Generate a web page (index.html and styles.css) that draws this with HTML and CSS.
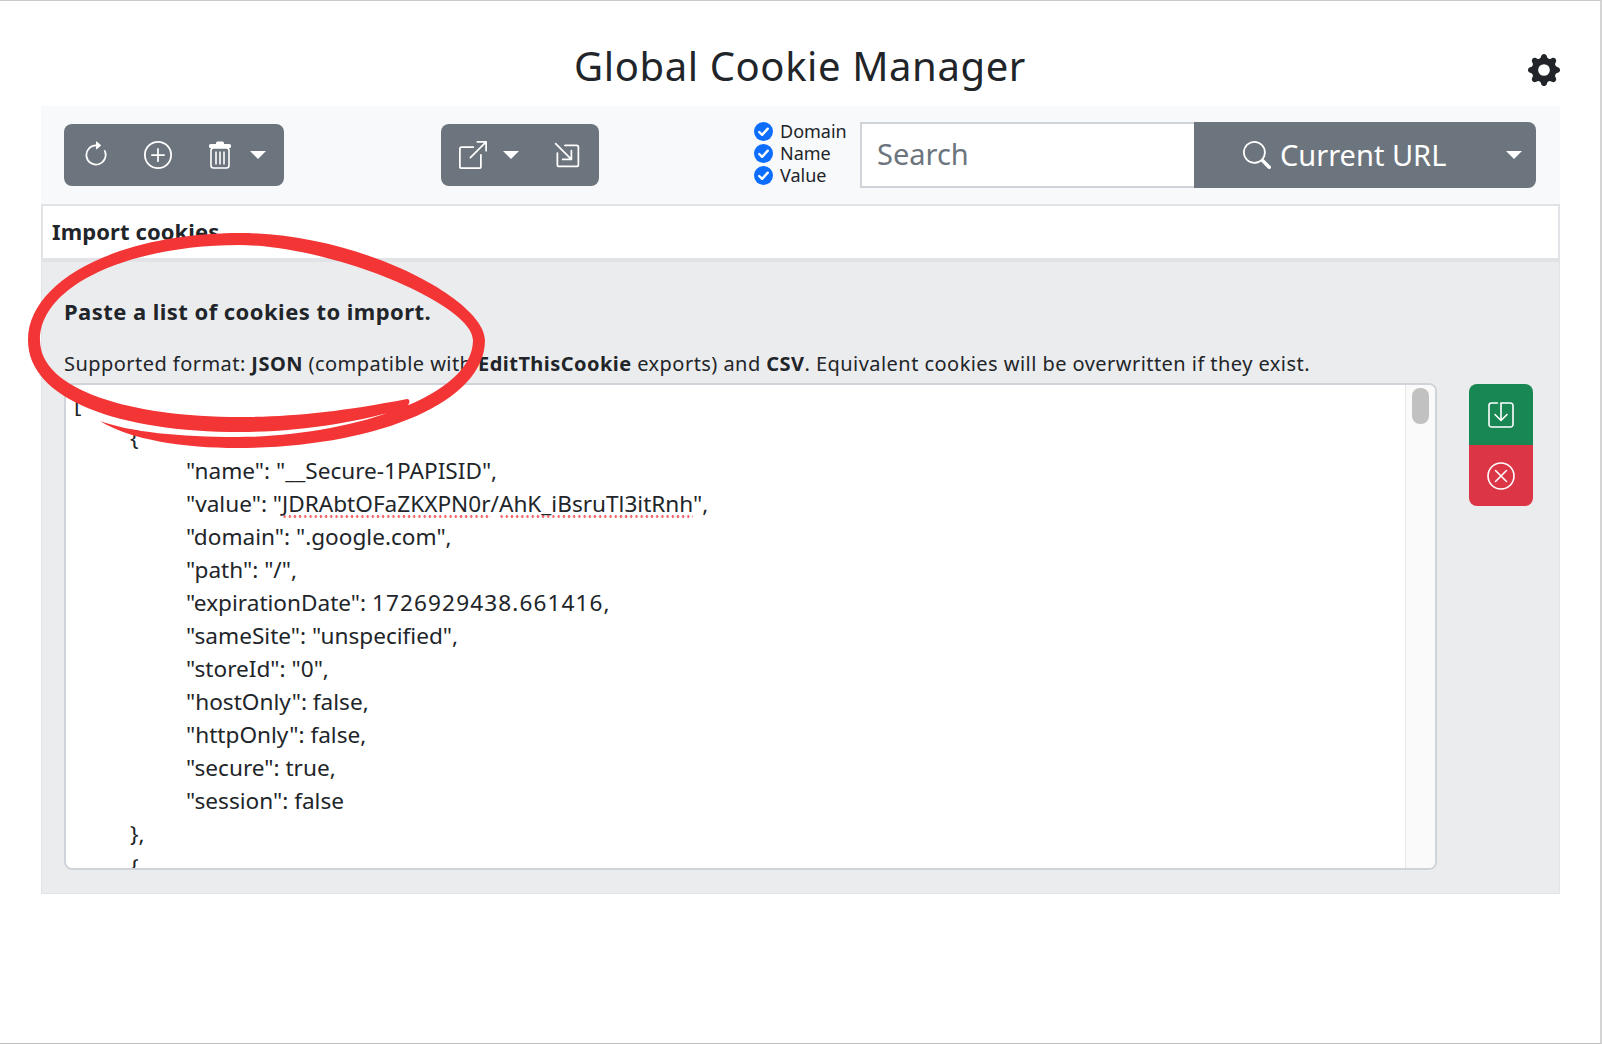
FILE: index.html
```html
<!DOCTYPE html>
<html lang="en">
<head>
<meta charset="utf-8">
<title>Global Cookie Manager</title>
<link rel="stylesheet" href="styles.css">
</head>
<body>
<div class="frame">
  <header class="top">
    <h1 class="title">Global Cookie Manager</h1>
    <svg class="gear" viewBox="0 0 16 16"><path d="M9.405 1.05c-.413-1.4-2.397-1.4-2.81 0l-.1.34a1.464 1.464 0 0 1-2.105.872l-.31-.17c-1.283-.698-2.686.705-1.987 1.987l.169.311c.446.82.023 1.841-.872 2.105l-.34.1c-1.4.413-1.4 2.397 0 2.81l.34.1a1.464 1.464 0 0 1 .872 2.105l-.17.31c-.698 1.283.705 2.686 1.987 1.987l.311-.169a1.464 1.464 0 0 1 2.105.872l.1.34c.413 1.4 2.397 1.4 2.81 0l.1-.34a1.464 1.464 0 0 1 2.105-.872l.31.17c1.283.698 2.686-.705 1.987-1.987l-.169-.311a1.464 1.464 0 0 1 .872-2.105l.34-.1c1.4-.413 1.4-2.397 0-2.81l-.34-.1a1.464 1.464 0 0 1-.872-2.105l.17-.31c.698-1.283-.705-2.686-1.987-1.987l-.311.169a1.464 1.464 0 0 1-2.105-.872l-.1-.34zM8 10.93a2.929 2.929 0 1 1 0-5.858 2.929 2.929 0 0 1 0 5.858z"/></svg>
  </header>

  <section class="toolbar">
    <div class="group group-a">
      <svg class="ico ico-reload" viewBox="0 0 16 16"><path d="M8 3a5 5 0 1 0 4.546 2.914.5.5 0 0 1 .908-.417A6 6 0 1 1 8 2v1z"/><path d="M8 4.466V.534a.25.25 0 0 1 .41-.192l2.36 1.966c.12.1.12.284 0 .384L8.41 4.658A.25.25 0 0 1 8 4.466z"/></svg>
      <svg class="ico ico-plus" viewBox="0 0 16 16"><path d="M8 15A7 7 0 1 1 8 1a7 7 0 0 1 0 14zm0 1A8 8 0 1 0 8 0a8 8 0 0 0 0 16z"/><path d="M8 4a.5.5 0 0 1 .5.5v3h3a.5.5 0 0 1 0 1h-3v3a.5.5 0 0 1-1 0v-3h-3a.5.5 0 0 1 0-1h3v-3A.5.5 0 0 1 8 4z"/></svg>
      <svg class="ico ico-trash" viewBox="0 0 24 28"><rect x="1" y="3" width="22" height="4" rx="1.5"/><rect x="8" y="0.5" width="8" height="4" rx="1.5"/><rect class="line" x="3" y="7" width="18" height="20" rx="2.5"/><path class="line" d="M8 10.5v13M12 10.5v13M16 10.5v13"/></svg>
      <span class="caret caret-a"></span>
    </div>
    <div class="group group-b">
      <svg class="ico ico-export" viewBox="0 0 16 16"><path d="M8.636 3.5a.5.5 0 0 0-.5-.5H1.5A1.5 1.5 0 0 0 0 4.5v10A1.5 1.5 0 0 0 1.5 16h10a1.5 1.5 0 0 0 1.5-1.5V7.864a.5.5 0 0 0-1 0V14.5a.5.5 0 0 1-.5.5h-10a.5.5 0 0 1-.5-.5v-10a.5.5 0 0 1 .5-.5h6.636a.5.5 0 0 0 .5-.5z"/><path d="M16 .5a.5.5 0 0 0-.5-.5h-5a.5.5 0 0 0 0 1h3.793L6.146 9.146a.5.5 0 1 0 .708.708L15 1.707V5.5a.5.5 0 0 0 1 0v-5z"/></svg>
      <span class="caret caret-b"></span>
      <svg class="ico ico-import" viewBox="0 0 16 16"><path d="M6.364 2.5a.5.5 0 0 1 .5-.5H13.5A1.5 1.5 0 0 1 15 3.5v10a1.5 1.5 0 0 1-1.5 1.5h-10A1.5 1.5 0 0 1 2 13.5V6.864a.5.5 0 1 1 1 0V13.5a.5.5 0 0 0 .5.5h10a.5.5 0 0 0 .5-.5v-10a.5.5 0 0 0-.5-.5H6.864a.5.5 0 0 1-.5-.5z"/><path d="M11 10.5a.5.5 0 0 1-.5.5h-5a.5.5 0 0 1 0-1h3.793L1.146 1.854a.5.5 0 1 1 .708-.708L10 9.293V5.5a.5.5 0 0 1 1 0v5z"/></svg>
    </div>
    <div class="checks">
      <div class="check"><svg class="tick" viewBox="0 0 20 20"><circle cx="10" cy="10" r="10"/><path d="M5.5 10.5l3 3 6-6.5"/></svg><span class="check-label">Domain</span></div>
      <div class="check"><svg class="tick" viewBox="0 0 20 20"><circle cx="10" cy="10" r="10"/><path d="M5.5 10.5l3 3 6-6.5"/></svg><span class="check-label">Name</span></div>
      <div class="check"><svg class="tick" viewBox="0 0 20 20"><circle cx="10" cy="10" r="10"/><path d="M5.5 10.5l3 3 6-6.5"/></svg><span class="check-label">Value</span></div>
    </div>
    <div class="search">
      <div class="search-input">Search</div>
      <div class="search-btn">
        <svg class="ico-search" viewBox="0 0 16 16"><path d="M11.742 10.344a6.5 6.5 0 1 0-1.397 1.398h-.001c.03.04.062.078.098.115l3.85 3.85a1 1 0 0 0 1.415-1.414l-3.85-3.85a1.007 1.007 0 0 0-.115-.1zM12 6.5a5.5 5.5 0 1 1-11 0 5.5 5.5 0 0 1 11 0z"/></svg>
        <span class="search-label">Current URL</span>
        <span class="caret caret-c"></span>
      </div>
    </div>
  </section>

  <section class="card">
    <div class="card-head">Import cookies</div>
    <div class="card-body">
      <p class="lead">Paste a list of cookies to import.</p>
      <p class="info">Supported format: <b>JSON</b> (compatible with <b>EditThisCookie</b> exports) and <b>CSV</b>. Equivalent cookies will be overwritten if they exist.</p>
      <div class="work">
        <div class="editor">
          <pre class="code">[
	{
		"name": "__Secure-1PAPISID",
		"value": "<span class="spell">JDRAbtOFaZKXPN0r</span>/<span class="spell">AhK_iBsruTl3itRnh</span>",
		"domain": ".google.com",
		"path": "/",
		"expirationDate": <span class="num">1726929438.661416</span>,
		"sameSite": "unspecified",
		"storeId": "0",
		"hostOnly": false,
		"httpOnly": false,
		"secure": true,
		"session": false
	},
	{
</pre>
          <div class="scroll"><div class="thumb"></div></div>
        </div>
        <div class="actions">
          <div class="act act-save"><svg viewBox="0 0 28 28"><path d="M10.5 2H4.5A2.5 2.5 0 0 0 2 4.500V23.500A2.500 2.500 0 0 0 4.500 26H23.500A2.500 2.500 0 0 0 26 23.500V4.500A2.500 2.500 0 0 0 23.500 2H14"/><path d="M14 2.500V19M8 13.500l6 6 6-6"/></svg></div>
          <div class="act act-cancel"><svg viewBox="0 0 28 28"><circle cx="14" cy="14" r="13"/><path d="M8.500 8.500l11 11M19.500 8.500l-11 11"/></svg></div>
        </div>
      </div>
    </div>
  </section>
</div>
<svg class="scribble" viewBox="0 0 1602 1044"><path d="M407 399C340 412 290 417 240 417C130 417 40 390 40 340C40 285 130 245 240 245C335 246 473 305 473 340C473 400 340 437 237 437C180 437 130 432 100 421C130 440 185 448 237 448C370 448 485 405 485 340C485 300 360 233 240 233C120 233 28 280 28 340C28 400 120 432 240 432C300 432 360 422 405 408C410 405 411 399 407 399Z"/></svg>
</body>
</html>
```

FILE: styles.css
```css
* { box-sizing: border-box; }
html, body { margin: 0; padding: 0; }
body {
  width: 1602px;
  height: 1044px;
  overflow: hidden;
  background: #fff;
  color: #212529;
  font-family: "Noto Sans", "Open Sans", sans-serif;
  position: relative;
}
.frame {
  width: 1602px;
  height: 1044px;
  border-top: 1px solid #c9c9c9;
  border-right: 2px solid #d4d4d4;
  border-bottom: 1px solid #bdbdbd;
  padding: 0 41px;
}
.top {
  height: 105px;
  display: flex;
  align-items: center;
  justify-content: center;
  position: relative;
}
.title {
  margin: 0;
  font-size: 40px;
  font-weight: 400;
  letter-spacing: 0.6px;
  line-height: 48px;
  padding-top: 24px;
}
.gear {
  position: absolute;
  right: -1px;
  top: 53px;
  width: 32px;
  height: 32px;
  fill: #212529;
}
.toolbar {
  display: flex;
  align-items: center;
  height: 98px;
  padding-left: 23px;
  background: #f8f9fa;
  width: 1519px;
}
.group {
  display: flex;
  align-items: center;
  height: 62px;
  border-radius: 8px;
  background: #6c757d;
  position: relative;
}
.group-a { width: 220px; padding-left: 18px; }
.group-b { width: 158px; margin-left: 157px; padding-left: 18px; }
.ico { fill: #fff; flex: none; }
.ico-reload { width: 28px; height: 28px; }
.ico-plus { width: 28px; height: 28px; margin-left: 34px; }
.ico-trash { width: 24px; height: 28px; margin-left: 36px; }
.ico-trash .line { fill: none; stroke: #fff; stroke-width: 1.6; }
.ico-export { width: 28px; height: 28px; }
.ico-import { width: 28px; height: 28px; margin-left: 34px; }
.caret {
  width: 0;
  height: 0;
  border-left: 8px solid transparent;
  border-right: 8px solid transparent;
  border-top: 8px solid #fff;
  flex: none;
}
.caret-a { margin-left: 18px; }
.caret-b { margin-left: 16px; }
.checks {
  width: 106px;
  margin-left: 155px;
  font-size: 18px;
  line-height: 22px;
}
.check { display: flex; align-items: center; height: 22px; }
.check-label { position: relative; top: -2px; }
.tick { width: 19px; height: 19px; margin-right: 7px; flex: none; position: relative; top: -2px; left: 0; }
.tick circle { fill: #0d6efd; }
.tick path { fill: none; stroke: #fff; stroke-width: 2.5; stroke-linecap: round; stroke-linejoin: round; }
.search { display: flex; width: 676px; height: 66px; }
.search-input {
  width: 334px;
  background: #fff;
  border: 2px solid #ced4da;
  border-right: 0;
  color: #6c757d;
  font-size: 29px;
  line-height: 60px;
  padding-left: 15px;
}
.search-btn {
  width: 342px;
  background: #6c757d;
  color: #fff;
  border-radius: 0 8px 8px 0;
  display: flex;
  align-items: center;
  padding-left: 49px;
}
.ico-search { width: 28px; height: 28px; fill: #fff; flex: none; }
.search-label { font-size: 29px; margin-left: 9px; position: relative; top: -1px; }
.caret-c { margin-left: 60px; }
.card { width: 1519px; }
.card-head {
  height: 58px;
  border: 2px solid #e1e3e7;
  border-bottom-width: 4px;
  font-size: 22px;
  font-weight: 700;
  letter-spacing: 0.1px;
  line-height: 50px;
  padding-left: 9px;
}
.card-body {
  height: 632px;
  background: #ebecee;
  border: 1px solid #e1e3e7;
  border-top: 0;
  padding: 0 22px;
}
.lead {
  margin: 0;
  padding-top: 34px;
  font-size: 22px;
  font-weight: 700;
  letter-spacing: 0.45px;
  line-height: 30px;
}
.info {
  margin: 0;
  padding-top: 23px;
  font-size: 20px;
  letter-spacing: 0.45px;
  line-height: 30px;
}
.work { display: flex; margin-top: 4px; }
.editor {
  width: 1373px;
  height: 487px;
  background: #fff;
  border: 2px solid #ced4da;
  border-radius: 8px;
  display: flex;
  overflow: hidden;
}
.code {
  flex: 1;
  margin: 0;
  padding: 3px 0 0 8px;
  font-family: "Noto Sans", "Open Sans", sans-serif;
  font-size: 22.6px;
  line-height: 33px;
  tab-size: 56px;
  overflow: hidden;
  color: #212529;
}
.num { letter-spacing: 1.1px; }
.spell {
  background: radial-gradient(circle, #f4676b 1.1px, transparent 1.5px) left bottom 1px / 5.2px 3px repeat-x;
}
.scroll {
  width: 30px;
  background: #fafafa;
  border-left: 1px solid #e8e8e8;
  padding: 3px 6px;
}
.thumb { height: 36px; border-radius: 8px; background: #c1c1c1; }
.actions { width: 64px; margin-left: 32px; padding-top: 1px; }
.act {
  height: 61px;
  display: flex;
  align-items: center;
  justify-content: center;
}
.act svg {
  width: 28px;
  height: 28px;
  fill: none;
  stroke: #fff;
  stroke-width: 1.6;
  stroke-linecap: round;
  stroke-linejoin: round;
}
.act-save { background: #198754; border-radius: 8px 8px 0 0; }
.act-cancel { background: #dc3545; border-radius: 0 0 8px 8px; }
.scribble {
  position: absolute;
  left: 0;
  top: 0;
  width: 1602px;
  height: 1044px;
  fill: #f43535;
  pointer-events: none;
}
```
